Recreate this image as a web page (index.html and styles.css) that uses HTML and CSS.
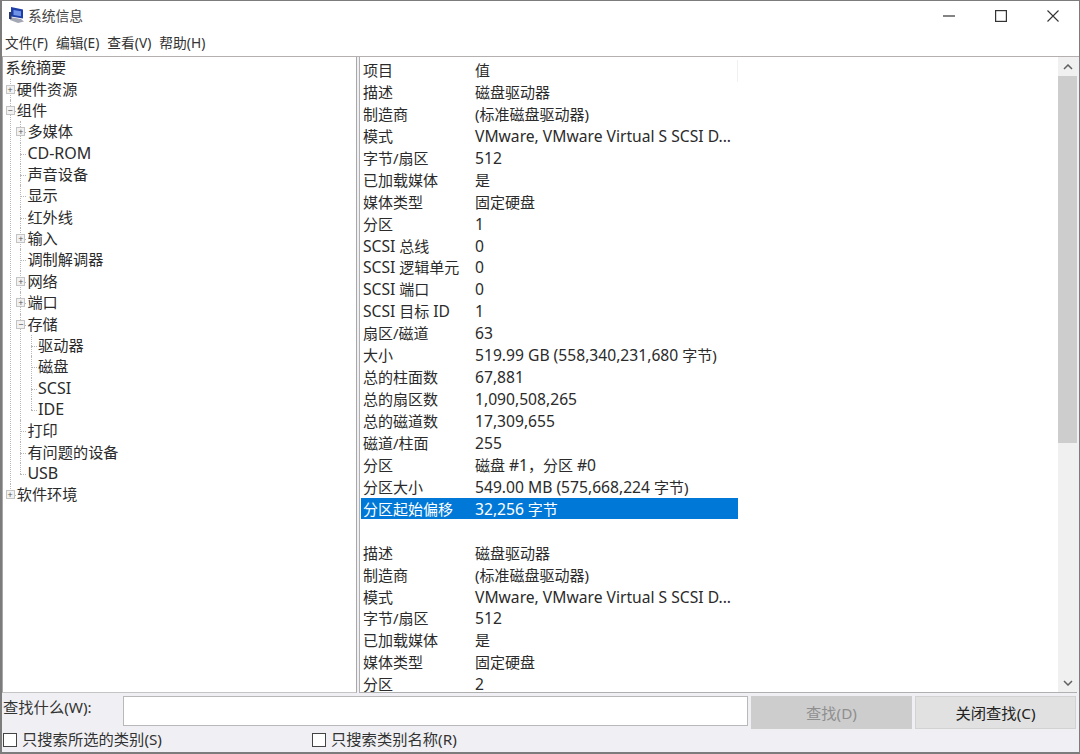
FILE: index.html
```html
<!DOCTYPE html>
<html lang="zh">
<head>
<meta charset="utf-8">
<title>系统信息</title>
<link rel="stylesheet" href="styles.css">
</head>
<body>
<div class="window">
  <header class="titlebar">
    <svg class="app-icon" width="18" height="18" viewBox="0 0 18 18">
      <path d="M3 1l12 2.500v9L3 10.500z" fill="#1f3fa8"/>
      <path d="M5.500 4l7.500 1.300v5L5.500 9z" fill="#6f93e6"/>
      <path d="M2 11l11 2 3 2.500-6 1.500-8-3z" fill="#a4a8b4"/>
      <path d="M1 6h2.500v7H1z" fill="#2a3a6a"/>
    </svg>
    <span class="title">系统信息</span>
    <div class="controls">
      <svg width="12" height="12" viewBox="0 0 12 12"><path d="M0 6h12" stroke="#333" stroke-width="1.2"/></svg>
      <svg width="12" height="12" viewBox="0 0 12 12"><rect x=".6" y=".6" width="10.8" height="10.8" fill="none" stroke="#333" stroke-width="1.2"/></svg>
      <svg width="12" height="12" viewBox="0 0 12 12"><path d="M.5.5l11 11M11.500.5l-11 11" stroke="#333" stroke-width="1.1"/></svg>
    </div>
  </header>
  <nav class="menubar">
    <span>文件(F)</span><span>编辑(E)</span><span>查看(V)</span><span>帮助(H)</span>
  </nav>
  <main class="panes">
    <div class="tree-pane">
      <ul class="tree">
        <li class="root"><span class="row">系统摘要</span>
          <ul>
            <li><i class="exp">+</i><span class="row">硬件资源</span></li>
            <li><i class="exp">−</i><span class="row">组件</span>
              <ul>
                <li><i class="exp">+</i><span class="row">多媒体</span></li>
                <li><span class="row lat">CD-ROM</span></li>
                <li><span class="row">声音设备</span></li>
                <li><span class="row">显示</span></li>
                <li><span class="row">红外线</span></li>
                <li><i class="exp">+</i><span class="row">输入</span></li>
                <li><span class="row">调制解调器</span></li>
                <li><i class="exp">+</i><span class="row">网络</span></li>
                <li><i class="exp">+</i><span class="row">端口</span></li>
                <li><i class="exp">−</i><span class="row">存储</span>
                  <ul>
                    <li><span class="row">驱动器</span></li>
                    <li><span class="row">磁盘</span></li>
                    <li><span class="row lat">SCSI</span></li>
                    <li><span class="row lat">IDE</span></li>
                  </ul>
                </li>
                <li><span class="row">打印</span></li>
                <li><span class="row">有问题的设备</span></li>
                <li><span class="row lat">USB</span></li>
              </ul>
            </li>
            <li><i class="exp">+</i><span class="row">软件环境</span></li>
          </ul>
        </li>
      </ul>
    </div>
    <div class="list-pane">
      <div class="list">
        <div class="item head"><span>项目</span><span>值</span></div>
        <div class="item"><span>描述</span><span>磁盘驱动器</span></div>
        <div class="item"><span>制造商</span><span>(标准磁盘驱动器)</span></div>
        <div class="item"><span>模式</span><span class="lat">VMware, VMware Virtual S SCSI D...</span></div>
        <div class="item"><span>字节/扇区</span><span class="lat">512</span></div>
        <div class="item"><span>已加载媒体</span><span>是</span></div>
        <div class="item"><span>媒体类型</span><span>固定硬盘</span></div>
        <div class="item"><span>分区</span><span class="lat">1</span></div>
        <div class="item"><span><b class="lat">SCSI</b> 总线</span><span class="lat">0</span></div>
        <div class="item"><span><b class="lat">SCSI</b> 逻辑单元</span><span class="lat">0</span></div>
        <div class="item"><span><b class="lat">SCSI</b> 端口</span><span class="lat">0</span></div>
        <div class="item"><span><b class="lat">SCSI</b> 目标 <b class="lat">ID</b></span><span class="lat">1</span></div>
        <div class="item"><span>扇区/磁道</span><span class="lat">63</span></div>
        <div class="item"><span>大小</span><span><b class="lat">519.99 GB (558,340,231,680</b> 字节)</span></div>
        <div class="item"><span>总的柱面数</span><span class="lat">67,881</span></div>
        <div class="item"><span>总的扇区数</span><span class="lat">1,090,508,265</span></div>
        <div class="item"><span>总的磁道数</span><span class="lat">17,309,655</span></div>
        <div class="item"><span>磁道/柱面</span><span class="lat">255</span></div>
        <div class="item"><span>分区</span><span>磁盘 <b class="lat">#1</b>，分区 <b class="lat">#0</b></span></div>
        <div class="item"><span>分区大小</span><span><b class="lat">549.00 MB (575,668,224</b> 字节)</span></div>
        <div class="item selected"><span>分区起始偏移</span><span><b class="lat">32,256</b> 字节</span></div>
        <div class="item"><span></span><span></span></div>
        <div class="item"><span>描述</span><span>磁盘驱动器</span></div>
        <div class="item"><span>制造商</span><span>(标准磁盘驱动器)</span></div>
        <div class="item"><span>模式</span><span class="lat">VMware, VMware Virtual S SCSI D...</span></div>
        <div class="item"><span>字节/扇区</span><span class="lat">512</span></div>
        <div class="item"><span>已加载媒体</span><span>是</span></div>
        <div class="item"><span>媒体类型</span><span>固定硬盘</span></div>
        <div class="item last"><span>分区</span><span class="lat">2</span></div>
      </div>
      <div class="scrollbar">
        <div class="arrow"><svg width="10" height="6" viewBox="0 0 10 6"><path d="M1 5l4-4 4 4" fill="none" stroke="#606060" stroke-width="1.5"/></svg></div>
        <div class="track"><div class="thumb"></div></div>
        <div class="arrow"><svg width="10" height="6" viewBox="0 0 10 6"><path d="M1 1l4 4 4-4" fill="none" stroke="#606060" stroke-width="1.5"/></svg></div>
      </div>
    </div>
  </main>
  <footer class="findbar">
    <div class="find-row">
      <label class="find-label">查找什么(W):</label>
      <div class="find-input"></div>
      <div class="btn disabled">查找(D)</div>
      <div class="btn">关闭查找(C)</div>
    </div>
    <div class="check-row">
      <span class="check first"><i class="box"></i>只搜索所选的类别(S)</span>
      <span class="check"><i class="box"></i>只搜索类别名称(R)</span>
    </div>
  </footer>
</div>
</body>
</html>
```

FILE: styles.css
```css
* { box-sizing: border-box; }
html, body { margin: 0; padding: 0; }
body {
  width: 1080px;
  height: 754px;
  overflow: hidden;
  font-family: "Noto Sans", "Noto Sans CJK SC", sans-serif;
  font-size: 15px;
  color: #2b2b2b;
}
b { font-weight: 400; }
.lat { font-size: 15.65px; }
.window {
  width: 1080px;
  height: 754px;
  display: flex;
  flex-direction: column;
  background: #f0f0f4;
  border: 1px solid #7c7c7c;
  border-width: 1px 1px 2px 2px;
}
.titlebar {
  height: 32px;
  flex: none;
  display: flex;
  align-items: center;
  background: #fff;
  padding: 0 0 3px 6px;
}
.app-icon { flex: none; margin-bottom: 1px; }
.title { margin: 0 0 2px 2px; font-size: 13.75px; color: #444; }
.controls {
  margin-left: auto;
  display: flex;
  align-items: center;
  gap: 40px;
  padding-right: 20px;
}
.menubar {
  height: 24px;
  flex: none;
  display: flex;
  gap: 8px;
  align-items: center;
  background: #fff;
  padding: 0 0 5px 3px;
  font-size: 13.75px;
  color: #333;
  border-bottom: 1px solid #b4b0b0;
}
.panes {
  height: 636px;
  flex: none;
  display: flex;
  gap: 2px;
  padding-right: 2px;
}
.tree-pane {
  width: 355px;
  flex: none;
  background: #fff;
  border-right: 1px solid #a8a8a8;
  border-left: 1px solid #a8a8a8;
  border-bottom: 1px solid #c4c4c4;
  overflow: hidden;
  padding-top: 0.4px;
  font-size: 15.2px;
}
.tree, .tree ul { list-style: none; margin: 0; padding: 0; }
.tree ul { padding-left: 10.7px; }
.tree li { position: relative; }
.row {
  display: block;
  height: 21.35px;
  line-height: 21.35px;
  padding-left: 3px;
  white-space: nowrap;
}
.row.lat { font-size: 16px; }
.root > .row { padding-left: 2.500px; }
.tree li ul > li::before {
  content: "";
  position: absolute;
  left: -4px;
  top: 0;
  bottom: 0;
  border-left: 1px dotted #b8b8b8;
}
.tree li ul > li:last-child::before { bottom: auto; height: 11px; }
.tree li ul > li::after {
  content: "";
  position: absolute;
  left: -4px;
  top: 11px;
  width: 6px;
  border-top: 1px dotted #b8b8b8;
}
.exp {
  position: absolute;
  z-index: 1;
  left: -8px;
  top: 6px;
  width: 9px;
  height: 9px;
  background: #f2f2f2;
  border: 1px solid #c4c4c4;
  font-style: normal;
  font-size: 9px;
  line-height: 7px;
  text-align: center;
  color: #555;
}
.list-pane {
  flex: 1;
  display: flex;
  min-width: 0;
  background: #fff;
  border: 1px solid #b0b0b0;
  border-width: 0 0 1px 1px;
}
.list {
  flex: 1;
  min-width: 0;
  padding: 3px 0 0 1px;
}
.item {
  display: grid;
  grid-template-columns: 112px 265px;
  width: 377px;
  height: 21.95px;
  line-height: 21.95px;
  white-space: nowrap;
}
.item > span { padding-left: 2px; }
.item.last { height: 13px; line-height: 13px; margin-top: 4px; }
.head { border-right: 1px solid #f0f0f0; }
.selected {
  height: 21px;
  line-height: 23.95px;
  margin: -1px 0 1.95px;
  background: #0078d7;
  color: #fff;
}
.scrollbar {
  width: 19px;
  flex: none;
  display: flex;
  flex-direction: column;
  background: #f0f0f0;
}
.arrow {
  height: 19px;
  flex: none;
  display: flex;
  align-items: center;
  justify-content: center;
}
.track { flex: 1; }
.thumb { height: 367px; background: #cdcdcd; }
.findbar { flex: 1; padding: 3px 1px 0 1px; font-size: 15.3px; }
.find-row { display: flex; align-items: flex-start; }
.find-label { width: 120px; flex: none; height: 28px; line-height: 22px; color: #333; }
.find-input {
  width: 625px;
  height: 29.500px;
  flex: none;
  background: #fff;
  border: 1px solid #b8b8b8;
}
.btn {
  width: 161px;
  height: 33px;
  flex: none;
  margin-left: 3px;
  text-align: center;
  line-height: 32px;
  background: #e1e1e1;
  border: 1px solid #d2d2d2;
  color: #222;
}
.btn.disabled { background: #cdcdcd; border-color: #cdcdcd; color: #8f8f8f; }
.check-row { display: flex; height: 18px; }
.check {
  display: flex;
  align-items: center;
  gap: 5px;
  color: #333;
  white-space: nowrap;
}
.check.first { width: 309px; }
.box {
  width: 14px;
  height: 14px;
  flex: none;
  margin-top: 4px;
  background: #fff;
  border: 1px solid #444;
}
```
